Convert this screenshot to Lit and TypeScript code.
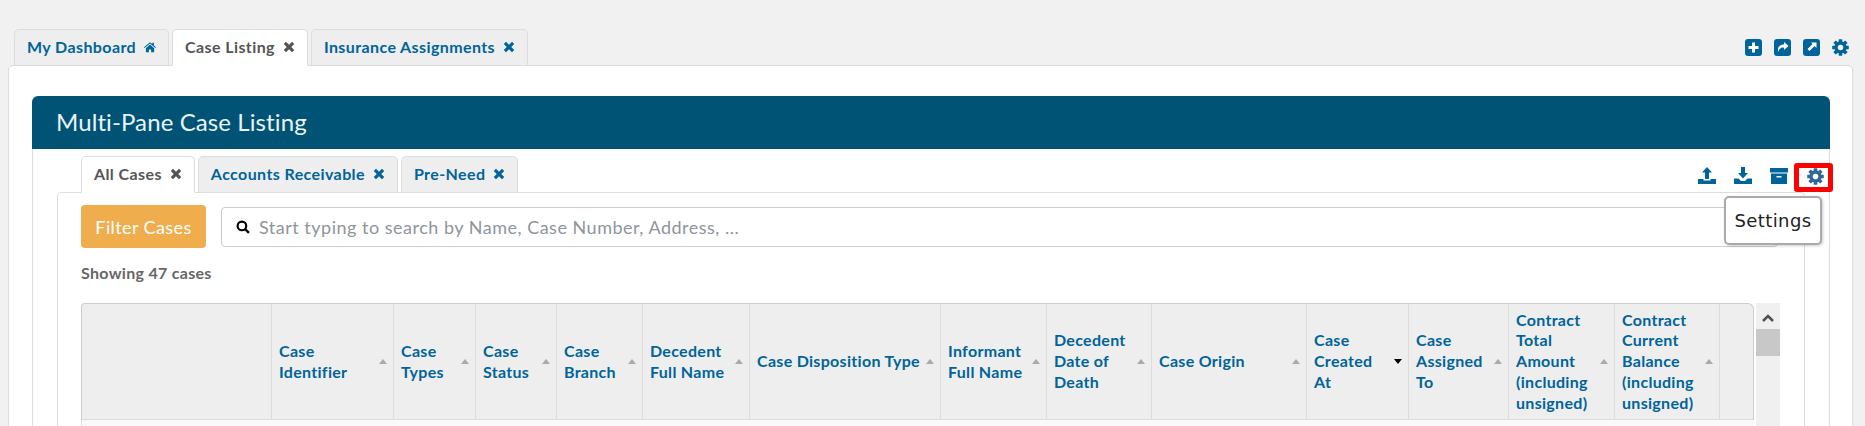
import { LitElement, html, css, svg } from "lit";
import { customElement } from "lit/decorators.js";

const home = svg`<path d="M8 1.500 0 8.400l.9 1L8 3.300l7.100 6.100.9-1-2.800-2.400V2.200h-2.100v1.900z"/><path d="M2.500 9.600 8 4.800l5.500 4.800V15H9.500v-3.800h-3V15h-4z"/>`;

const gear = () => svg`
  <circle cx="8" cy="8" r="4.200" fill="none" stroke="currentColor" stroke-width="3.200"/>
  ${[0, 45, 90, 135, 180, 225, 270, 315].map(
    (a) => svg`<rect x="6.300" y="0.200" width="3.400" height="3.600" rx=".4" fill="currentColor" transform="rotate(${a} 8 8)"/>`
  )}`;

const xmark = html`<svg viewBox="0 0 16 16"><path d="M4 1 8 5 12 1 15 4 11 8 15 12 12 15 8 11 4 15 1 12 5 8 1 4z"/></svg>`;

@customElement("app-root")
export class AppRoot extends LitElement {
  static styles = css`
    :host { display: block; width: 1865px; height: 426px; overflow: hidden; background: #f1f1f1; font-family: "Lato", "Open Sans", sans-serif; font-size: 16px; letter-spacing: .3px; color: #555; }
    .page { padding: 29px 12px 0 8px; }
    .toptabs { display: flex; align-items: flex-start; gap: 3px; height: 36px; padding-left: 6px; position: relative; z-index: 1; }
    .tab { box-sizing: border-box; height: 37px; display: flex; align-items: center; gap: 8px; padding: 0 12px 2px; background: #eee; border: 1px solid #ddd; border-radius: 5px 5px 0 0; color: #00649b; font-weight: 700; letter-spacing: .4px; white-space: nowrap; }
    .tab.active { background: #fff; color: #555; border-bottom-color: #fff; }
    .tab svg { width: 12px; height: 12px; fill: currentColor; flex: none; }
    .tab svg.home { width: 12px; height: 12px; }
    .tools { margin-left: auto; display: flex; gap: 12px; padding-top: 10px; margin-right: 4px; color: #00649b; }
    .tools svg { width: 17px; height: 17px; display: block; }
    .panel { box-sizing: border-box; background: #fff; border: 1px solid #ddd; border-radius: 5px 5px 0 0; padding: 30px 22px 0 23px; height: 420px; }
    .head { box-sizing: border-box; background: #005375; color: #e8f4fa; height: 53px; border-radius: 6px 6px 0 0; display: flex; align-items: center; padding: 0 0 2px 24px; font-size: 24px; font-weight: 400; letter-spacing: .1px; }
    .sub { padding: 7px 24px 0; position: relative; height: 300px; border: 1px solid #ddd; border-width: 0 1px; }
    .innertabs { display: flex; align-items: flex-start; gap: 3px; height: 36px; padding-left: 24px; position: relative; z-index: 1; }
    .icons { margin-left: auto; display: flex; align-items: flex-start; margin-right: -28px; padding-top: 7px; }
    .ic { width: 36px; height: 26px; display: flex; align-items: center; justify-content: center; color: #00649b; }
    .ic svg { width: 18px; height: 18px; fill: currentColor; }
    .ic.sel { box-sizing: border-box; border: 5px solid #f00; border-radius: 3px; width: 39px; height: 29px; margin-left: -3px; padding: 0 0 2px 3px; color: #336699; background: #fff; }
    .ic.sel svg { width: 17px; height: 17px; }
    .inner { border: 1px solid #ddd; border-radius: 4px 4px 0 0; padding: 12px 23px 0 23px; height: 300px; box-sizing: border-box; }
    .searchrow { display: flex; gap: 15px; align-items: center; }
    .filter { width: 125px; height: 43px; box-sizing: border-box; background: #f0ad4e; color: #fff; font-size: 18px; letter-spacing: .4px; border-radius: 4px; display: flex; align-items: center; justify-content: center; }
    .search { flex: 1; height: 40px; box-sizing: border-box; border: 1px solid #ccc; border-radius: 4px; display: flex; align-items: center; padding-left: 14px; gap: 9px; color: #8e959c; font-size: 18px; letter-spacing: .5px; margin-right: 3px; }
    .search svg { width: 14px; height: 14px; flex: none; }
    .showing { padding: 15px 0 20px; line-height: 20px; font-weight: 700; color: #666; }
    .tablewrap { display: flex; gap: 2px; }
    .table { border: 1px solid #ccc; border-bottom: 0; border-radius: 4px 6px 0 0; background: #eee; display: flex; height: 117px; width: 1673px; box-sizing: border-box; }
    .col { box-sizing: border-box; border-right: 1px solid #ddd; border-bottom: 1px solid #ddd; display: flex; align-items: center; padding: 0 6px 0 7px; color: #00649b; font-weight: 700; line-height: 20.700px; flex: none; white-space: pre-line; }
    .col:last-child { border-right: 0; }
    .col span { flex: 1; }
    .tri { width: 0; height: 0; border: 4px solid transparent; border-top: 0; border-bottom: 5px solid #aaa; flex: none; }
    .tri.d { border-bottom: 0; border-top: 5px solid #000; }
    .below { height: 10px; background: #f9f9f9; border-left: 1px solid #ddd; }
    .scroll { width: 24px; height: 130px; background: #f0f0f0; display: flex; flex-direction: column; align-items: center; padding-top: 10px; box-sizing: border-box; }
    .scroll svg { width: 12px; height: 10px; flex: none; }
    .thumb { width: 24px; height: 27px; background: #c8c8c8; margin-top: 6px; flex: none; }
    .tip { position: absolute; left: 1691px; top: 47px; z-index: 3; width: 98px; height: 49px; box-sizing: border-box; background: #fff; border: 2px solid #aaa; border-radius: 5px; box-shadow: 1px 1px 3px rgba(0,0,0,.2); display: flex; align-items: center; justify-content: center; font-family: "DejaVu Sans", sans-serif; font-size: 18px; letter-spacing: .4px; color: #222; }
  `;

  render() {
    const cols: [string, number, boolean?][] = [
      ["", 190],
      ["Case\nIdentifier", 122],
      ["Case\nTypes", 82],
      ["Case\nStatus", 81],
      ["Case\nBranch", 86],
      ["Decedent\nFull Name", 107],
      ["Case Disposition Type", 191],
      ["Informant\nFull Name", 106],
      ["Decedent\nDate of\nDeath", 105],
      ["Case Origin", 155],
      ["Case\nCreated\nAt", 102, true],
      ["Case\nAssigned\nTo", 100],
      ["Contract\nTotal\nAmount\n(including\nunsigned)", 106],
      ["Contract\nCurrent\nBalance\n(including\nunsigned)", 105],
      ["", 33],
    ];
    return html`<div class="page">
      <div class="toptabs">
        <div class="tab">My Dashboard <svg class="home" viewBox="0 0 16 16">${home}</svg></div>
        <div class="tab active">Case Listing ${xmark}</div>
        <div class="tab">Insurance Assignments ${xmark}</div>
        <div class="tools">
          <svg viewBox="0 0 17 17"><rect width="17" height="17" rx="3" fill="#00649b"/><path d="M7 3.500h3V7h3.500v3H10v3.500H7V10H3.500V7H7z" fill="#fff"/></svg>
          <svg viewBox="0 0 17 17"><rect width="17" height="17" rx="3" fill="#00649b"/><path d="M10 3l4.500 4-4.500 4V8.500C7 8.500 5 9.500 4.500 13 3 9 5 5.500 10 5.500z" fill="#fff"/></svg>
          <svg viewBox="0 0 17 17"><rect width="17" height="17" rx="3" fill="#00649b"/><path d="M8 3.500h5.500V9l-2-2-5 5-2-2 5-5z" fill="#fff"/></svg>
          <svg viewBox="0 0 16 16">${gear()}</svg>
        </div>
      </div>
      <div class="panel">
        <div class="head">Multi-Pane Case Listing</div>
        <div class="sub">
          <div class="innertabs">
            <div class="tab active">All Cases ${xmark}</div>
            <div class="tab">Accounts Receivable ${xmark}</div>
            <div class="tab">Pre-Need ${xmark}</div>
            <div class="icons">
              <div class="ic"><svg viewBox="0 0 18 18"><path d="M9 0l5 5.500h-3V12H7V5.500H4z"/><path d="M0 12h5.500v1.500h7V12H18v5H0z"/></svg></div>
              <div class="ic"><svg viewBox="0 0 18 18"><path d="M7 0h4v6h3l-5 5.500L4 6h3z"/><path d="M0 11.500h4.500L7 14h4l2.500-2.500H18V17H0z"/></svg></div>
              <div class="ic"><svg viewBox="0 0 18 18"><path fill-rule="evenodd" d="M0 1h18v4.500H0zM1 6.500h16V17H1zM6.500 9v1.500h5V9z"/></svg></div>
              <div class="ic sel"><svg viewBox="0 0 16 16">${gear()}</svg></div>
            </div>
          </div>
          <div class="inner">
            <div class="searchrow">
              <div class="filter">Filter Cases</div>
              <div class="search"><svg viewBox="0 0 13 13"><circle cx="5.500" cy="5.500" r="4" fill="none" stroke="#000" stroke-width="2"/><path d="M8.500 8.500 12 12" stroke="#000" stroke-width="2.200"/></svg>Start typing to search by Name, Case Number, Address, ...</div>
            </div>
            <div class="showing">Showing 47 cases</div>
            <div class="tablewrap">
              <div>
                <div class="table">
                  ${cols.map(([t, w, d]) => html`<div class="col" style="width:${w}px"><span>${t}</span>${t ? html`<i class="tri ${d ? "d" : ""}"></i>` : ""}</div>`)}
                </div>
                <div class="below"></div>
              </div>
              <div class="scroll"><svg viewBox="0 0 12 10"><path d="M1 8l5-5 5 5" fill="none" stroke="#505050" stroke-width="2.500"/></svg><div class="thumb"></div></div>
            </div>
          </div>
          <div class="tip">Settings</div>
        </div>
      </div>
    </div>`;
  }
}
